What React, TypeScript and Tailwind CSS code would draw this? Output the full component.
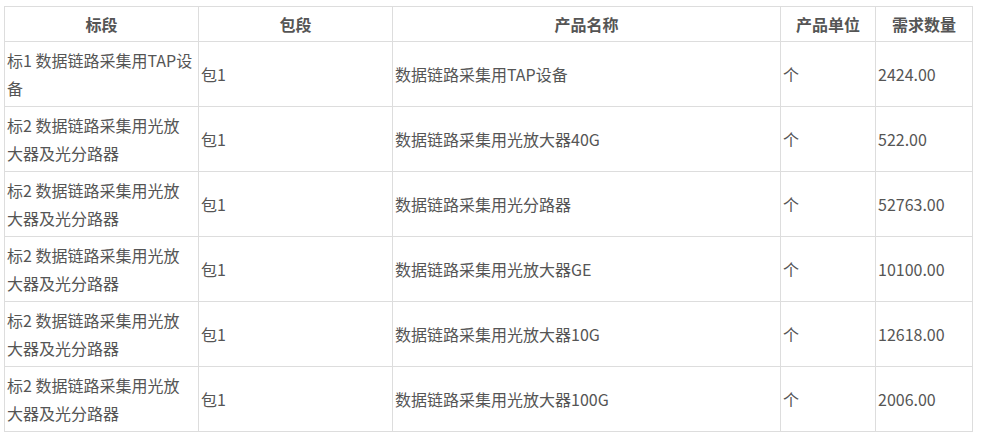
import React from "react";

const rows = [
  ["标1 数据链路采集用TAP设备", "包1", "数据链路采集用TAP设备", "个", "2424.00"],
  ["标2 数据链路采集用光放大器及光分路器", "包1", "数据链路采集用光放大器40G", "个", "522.00"],
  ["标2 数据链路采集用光放大器及光分路器", "包1", "数据链路采集用光分路器", "个", "52763.00"],
  ["标2 数据链路采集用光放大器及光分路器", "包1", "数据链路采集用光放大器GE", "个", "10100.00"],
  ["标2 数据链路采集用光放大器及光分路器", "包1", "数据链路采集用光放大器10G", "个", "12618.00"],
  ["标2 数据链路采集用光放大器及光分路器", "包1", "数据链路采集用光放大器100G", "个", "2006.00"],
];

const headers = ["标段", "包段", "产品名称", "产品单位", "需求数量"];

export default function App() {
  return (
    <div
      className="w-[982px] h-[435px] bg-white pt-[6px] pl-[4px] text-[#555] text-[16px]"
      style={{ fontFamily: '"Microsoft YaHei", "Noto Sans CJK SC", "Noto Sans", sans-serif' }}
    >
      <table className="table-fixed border-collapse w-[968px]">
        <colgroup>
          <col className="w-[194px]" />
          <col className="w-[194px]" />
          <col className="w-[388px]" />
          <col className="w-[95px]" />
          <col className="w-[97px]" />
        </colgroup>
        <thead>
          <tr className="h-[35px]">
            {headers.map((h) => (
              <th
                key={h}
                className="border border-[#dddddd] px-[2px] py-0 font-bold text-center leading-[28px] text-[#555]"
              >
                {h}
              </th>
            ))}
          </tr>
        </thead>
        <tbody>
          {rows.map((r, i) => (
            <tr key={i} className="h-[65px]">
              {r.map((c, j) => (
                <td
                  key={j}
                  className="border border-[#dddddd] pl-[2px] pr-[4px] py-[4px] align-middle text-left leading-[28px] font-normal"
                >
                  {c}
                </td>
              ))}
            </tr>
          ))}
        </tbody>
      </table>
    </div>
  );
}
